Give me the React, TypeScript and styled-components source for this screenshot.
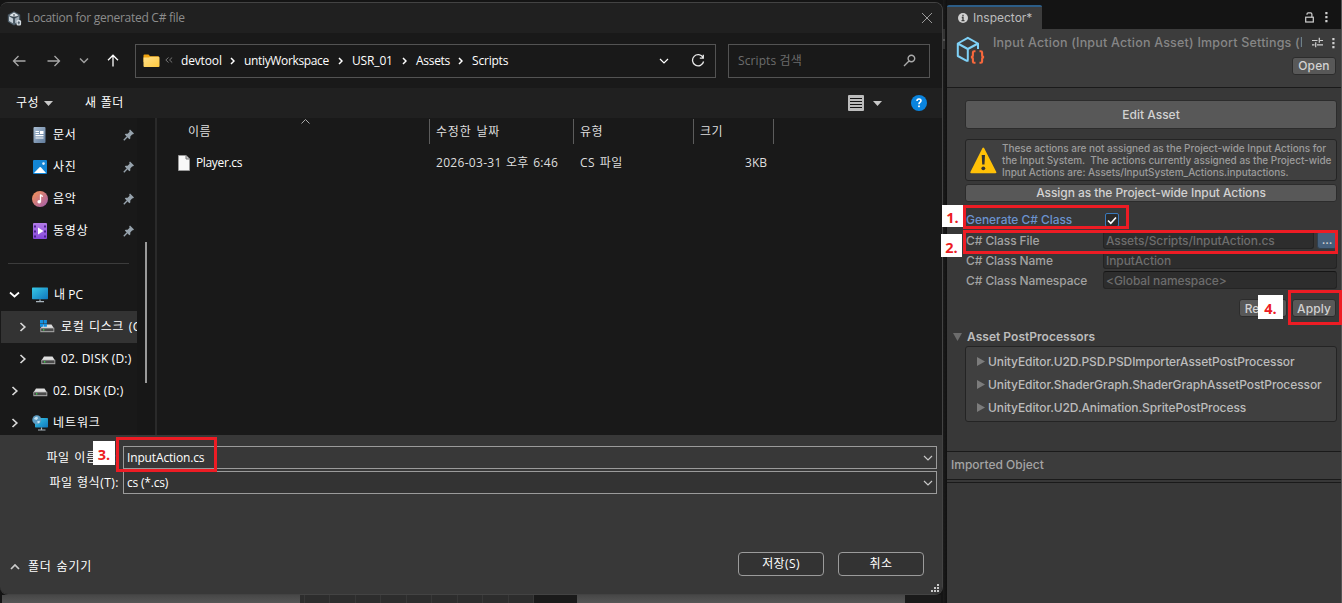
import React from "react";
import styled, { createGlobalStyle, css } from "styled-components";

const Global = createGlobalStyle`
  * { box-sizing: border-box; }
  html, body { margin: 0; padding: 0; background: #141414; overflow: hidden; }
  svg { flex: none; display: block; }
`;

const WIN_FONT = `"Open Sans", "Noto Sans CJK KR", sans-serif`;

const Screen = styled.div`
  position: relative;
  display: flex;
  width: 1342px;
  height: 603px;
  background: #141414;
  overflow: hidden;
`;

/* ---------- text ---------- */
const Text = styled.span<{ $size?: number; $ls?: number; $ws?: number; $color?: string; $weight?: number; $dy?: number }>`
  font-size: ${(p) => p.$size ?? 12}px;
  letter-spacing: ${(p) => p.$ls ?? 0}px;
  word-spacing: ${(p) => p.$ws ?? 0}px;
  color: ${(p) => p.$color ?? "inherit"};
  font-weight: ${(p) => p.$weight ?? "inherit"};
  white-space: pre;
  line-height: 16px;
  ${(p) => p.$dy && css`margin-top: ${p.$dy * 2}px;`}
`;

const Korean = styled(Text).attrs({ $ls: 0.5, $ws: 2 })``;

const UnityText = styled(Text)`
  font-size: 12px;
  font-weight: ${(p) => p.$weight ?? 500};
  letter-spacing: ${(p) => p.$ls ?? -0.09}px;
`;

/* ---------- file dialog ---------- */
const Left = styled.div`
  display: flex;
  flex-direction: column;
  width: 943px;
  padding-top: 2px;
  flex: none;
`;

const Dialog = styled.section`
  display: flex;
  flex-direction: column;
  width: 943px;
  height: 593px;
  border: solid #434343;
  border-width: 1px 1px 1px 0;
  border-radius: 8px;
  overflow: hidden;
  background: #191919;
  color: #fff;
  font-family: ${WIN_FONT};
  font-size: 12px;
`;

const TitleBar = styled.header`
  display: flex;
  align-items: center;
  height: 30px;
  padding: 0 9px 0 7px;
  gap: 5px;
  background: #202020;
  color: #8c8c8c;
`;

const Push = styled.span`
  margin-left: auto;
  display: flex;
`;

const AddressRow = styled.div`
  display: flex;
  align-items: center;
  height: 55px;
  padding-left: 12px;
`;

const NavButtons = styled.div`
  display: flex;
  width: 123px;
  align-items: center;
`;

const PathBox = styled.div`
  display: flex;
  align-items: center;
  width: 581px;
  height: 34px;
  border: 1px solid #535353;
  padding: 0 10px 0 7px;
`;

const Crumb = styled.span<{ $w: number }>`
  display: flex;
  align-items: center;
  width: ${(p) => p.$w}px;
`;

const SearchBox = styled(PathBox)`
  width: 202px;
  margin-left: 12px;
  padding: 0 13px 0 9px;
  justify-content: space-between;
`;

const Toolbar = styled.div`
  display: flex;
  align-items: center;
  height: 30px;
  padding: 0 15px 0 16px;
  background: #202020;
`;

const Main = styled.div`
  display: flex;
  height: 317px;
`;

const Tree = styled.nav`
  width: 137px;
  padding-top: 1px;
  overflow: hidden;
`;

const TreeRow = styled.div<{ $indent?: number; $selected?: boolean }>`
  display: flex;
  align-items: center;
  height: 32px;
  padding-left: ${(p) => p.$indent ?? 0}px;
  margin-left: ${(p) => (p.$selected ? 1 : 0)}px;
  background: ${(p) => (p.$selected ? "#333" : "transparent")};
`;

const Slot = styled.span<{ $w: number }>`
  display: flex;
  flex: none;
  align-items: center;
  width: ${(p) => p.$w}px;
`;

const TreeRule = styled.div`
  height: 1px;
  width: 121px;
  margin: 16px 0 15px 8px;
  background: #3c3c3c;
`;

const ScrollTrack = styled.div`
  width: 20px;
  background: #171717;
  border-right: 2px solid #2a2a2a;
  padding: 124px 0 0 8px;
`;

const ScrollThumb = styled.div`
  width: 2px;
  height: 141px;
  background: #9a9a9a;
`;

const FileList = styled.div`
  flex: 1;
`;

const Row = styled.div<{ $h: number; $top?: number }>`
  display: flex;
  align-items: center;
  height: ${(p) => p.$h}px;
  margin-top: ${(p) => p.$top ?? 0}px;
`;

const Cell = styled.div<{ $w: number; $pad?: number; $rule?: boolean; $end?: boolean }>`
  display: flex;
  align-items: center;
  height: 100%;
  width: ${(p) => p.$w}px;
  padding: 0 ${(p) => (p.$end ? 6 : 0)}px 0 ${(p) => p.$pad ?? 6}px;
  justify-content: ${(p) => (p.$end ? "flex-end" : "flex-start")};
  border-right: 1px solid ${(p) => (p.$rule ? "#5c5c5c" : "transparent")};
  color: #dedede;
`;

const SortMark = styled.span`
  align-self: flex-start;
  display: flex;
  margin-left: 90px;
`;

const Footer = styled.footer`
  display: flex;
  flex-direction: column;
  flex: 1;
  background: #383838;
  padding-top: 11px;
`;

const Field = styled.div<{ $gap?: number }>`
  display: flex;
  align-items: center;
  height: 23px;
  margin-bottom: ${(p) => p.$gap ?? 0}px;
`;

const FieldLabel = styled.label`
  display: flex;
  justify-content: flex-end;
  width: 123px;
  padding-right: 4px;
`;

const Combo = styled.div<{ $dark?: boolean }>`
  display: flex;
  align-items: center;
  justify-content: space-between;
  width: 814px;
  height: 23px;
  border: 1px solid #9b9b9b;
  padding: 0 3px 0 3px;
  background: ${(p) => (p.$dark ? "#333" : "#383838")};
`;

const Actions = styled.div`
  display: flex;
  align-items: center;
  gap: 14px;
  height: 24px;
  margin-top: 58px;
  padding: 0 18px 0 10px;
`;

const HideFolders = styled.div`
  display: flex;
  align-items: center;
  gap: 8px;
  margin: 5px auto 0 0;
`;

const WinButton = styled.button`
  display: flex;
  align-items: center;
  justify-content: center;
  width: 86px;
  height: 24px;
  padding: 0;
  border: 1px solid #9b9b9b;
  border-radius: 4px;
  background: #333;
  color: #fff;
  font-family: inherit;
`;

const Grip = styled.div`
  display: flex;
  justify-content: flex-end;
  padding: 8px 2px 0 0;
`;

/* ---------- editor behind the dialog ---------- */
const Behind = styled.div`
  display: flex;
  height: 8px;
  padding-left: 2px;
`;

const Strip = styled.div<{ $w: number; $bg: string }>`
  width: ${(p) => p.$w}px;
  background: ${(p) => p.$bg};
`;

const Gutter = styled.div`
  width: 4px;
  flex: none;
  padding-top: 29px;
  background: linear-gradient(90deg, #1b1b1b, #101010);
`;

const GutterMark = styled.div`
  width: 2px;
  height: 20px;
  background: linear-gradient(#333 50%, #555 50% 60%, #333 60%);
`;

/* ---------- inspector ---------- */
const Inspector = styled.aside`
  display: flex;
  flex-direction: column;
  width: 395px;
  background: #383838;
  border-right: 1px solid #555;
  font-family: Inter, sans-serif;
  color: #bcbcbc;
`;

const TabBar = styled.div`
  display: flex;
  align-items: flex-end;
  height: 29px;
  background: #141414;
`;

const Tab = styled.div`
  display: flex;
  align-items: center;
  gap: 5px;
  width: 95px;
  height: 24px;
  padding-left: 11px;
  border-top: 2px solid #2c5d87;
  border-radius: 2px 2px 0 0;
  background: #3c3c3c;
`;

const TabTools = styled.div`
  display: flex;
  align-items: center;
  gap: 11px;
  height: 24px;
  margin-left: auto;
  padding-right: 13px;
`;

const AssetHeader = styled.div`
  display: flex;
  height: 59px;
  padding: 7px 5px 0 9px;
  background: #3c3c3c;
  border-bottom: 1px solid #1a1a1a;
`;

const AssetInfo = styled.div`
  display: flex;
  flex-direction: column;
  flex: 1;
  margin-left: 8px;
`;

const AssetTitle = styled.div`
  display: flex;
  align-items: center;
  height: 14px;
  padding-right: 1px;
`;

const AssetTools = styled(Push)`
  margin-top: -1px;
`;

const Clip = styled.div`
  display: flex;
  width: 309px;
  overflow: hidden;
`;

const UnityButton = styled.button<{ $w?: number; $h: number; $blue?: boolean }>`
  display: flex;
  align-items: center;
  justify-content: center;
  flex: none;
  width: ${(p) => (p.$w ? `${p.$w}px` : "100%")};
  height: ${(p) => p.$h}px;
  padding: 0;
  border: 1px solid ${(p) => (p.$blue ? "#30404f" : "#2c2c2c")};
  border-radius: 3px;
  background: ${(p) => (p.$blue ? "#46607c" : "#585858")};
  color: #d2d2d2;
  font-family: inherit;
`;

const Body = styled.div`
  display: flex;
  flex-direction: column;
  height: 363px;
  padding: 12px 4px 0 18px;
`;

const HelpBox = styled.div`
  display: flex;
  align-items: center;
  gap: 5px;
  height: 42px;
  margin: 10px 0 3px;
  padding-left: 4px;
  border: 1px solid #242424;
  border-radius: 3px;
  background: #404040;
`;

const HelpLines = styled.div`
  display: flex;
  flex-direction: column;
  color: #9c9c9c;
`;

const HelpLine = styled(Text).attrs({ $size: 10, $weight: 500, $ls: -0.035 })`
  line-height: 12px;
`;

const Props = styled.div`
  display: flex;
  flex-direction: column;
  margin-top: 8px;
`;

const Prop = styled.div`
  display: flex;
  align-items: center;
  height: 20px;
  padding-left: 1px;
`;

const PropLabel = styled.div<{ $on?: boolean }>`
  display: flex;
  flex: none;
  width: 137px;
  color: ${(p) => (p.$on ? "#6b93cf" : "#a2a2a2")};
`;

const Input = styled.div<{ $w: number }>`
  display: flex;
  flex: none;
  align-items: center;
  width: ${(p) => p.$w}px;
  height: 18px;
  margin-right: 3px;
  padding-left: 2px;
  border: 1px solid #242424;
  border-top-color: #151515;
  border-radius: 3px;
  background: #2d2d2d;
  color: #6c6c6c;
`;

const Check = styled.div`
  display: flex;
  align-items: center;
  justify-content: center;
  width: 14px;
  height: 14px;
  margin-left: 2px;
  border: 1px solid #3a79bb;
  border-radius: 2px;
  background: #2a2a2a;
`;

const ApplyRow = styled.div`
  display: flex;
  justify-content: flex-end;
  gap: 5px;
  margin-top: 9px;
  padding-right: 1px;
`;

const Foldout = styled.div`
  display: flex;
  align-items: center;
  gap: 5px;
  height: 19px;
  margin: 10px 0 0 -12px;
`;

const Processors = styled.div`
  display: flex;
  flex-direction: column;
  height: 76px;
  padding: 3px 0 0 11px;
  border: 1px solid #242424;
  border-radius: 3px;
  background: #404040;
`;

const Processor = styled.div`
  display: flex;
  align-items: center;
  gap: 3px;
  height: 23px;
`;

const Imported = styled.div`
  display: flex;
  align-items: center;
  height: 29px;
  padding: 0 0 2px 4px;
  border: solid #1a1a1a;
  border-width: 1px 0;
  background: #3c3c3c;
`;

const ImportedRule = styled.div`
  height: 3px;
  border-bottom: 1px solid #1a1a1a;
`;

/* ---------- step annotations laid over the windows ---------- */
const Frame = styled.div<{ $x: number; $y: number; $w: number; $h: number }>`
  position: absolute;
  left: ${(p) => p.$x}px;
  top: ${(p) => p.$y}px;
  width: ${(p) => p.$w}px;
  height: ${(p) => p.$h}px;
  border: 3px solid #ed1c24;
`;

const Step = styled.div<{ $x: number; $y: number; $w: number; $h: number }>`
  position: absolute;
  display: flex;
  align-items: center;
  justify-content: center;
  left: ${(p) => p.$x}px;
  top: ${(p) => p.$y}px;
  width: ${(p) => p.$w}px;
  height: ${(p) => p.$h}px;
  padding-top: 4px;
  background: #fff;
  color: #ed1c24;
  font: 700 14.5px/14px "Open Sans", sans-serif;
`;

/* ---------- icons ---------- */
const Line = ({ d, w = 12, h = 12, c = "#fff", sw = 1.3 }: { d: string; w?: number; h?: number; c?: string; sw?: number }) => (
  <svg width={w} height={h} viewBox={`0 0 ${w} ${h}`} fill="none" stroke={c} strokeWidth={sw}>
    <path d={d} />
  </svg>
);

const Shape = ({ d, w, h, c }: { d: string; w: number; h: number; c: string }) => (
  <svg width={w} height={h} viewBox={`0 0 ${w} ${h}`} fill={c}>
    <path d={d} />
  </svg>
);

const UnityLogo = () => (
  <svg width="15" height="15" viewBox="0 0 15 15">
    <path d="M7 .3 13.2 3.8v7L7 14.4.8 10.8v-7z" fill="#4c5b66" />
    <path d="M7 1.6 11.6 4.2 7 6.8 2.4 4.2z" fill="#dfe5ea" />
    <path d="M2 5.2 6.3 7.7v4.8L2 10z" fill="#c4ced6" />
    <path d="M12 5.2 7.7 7.7v4.8L12 10z" fill="#9eabb6" />
    <path d="M7 3v3.8M4.6 5.6 7 6.8l2.4-1.2M7 7v5" stroke="#33404a" fill="none" />
    <rect x="9.5" y="9" width="4.6" height="5.6" rx="1.5" fill="#d5dde3" />
    <path d="M11.8 10.2v3.2M10.6 11.8h2.4" stroke="#44525d" strokeWidth=".9" />
  </svg>
);

const Folder = () => (
  <svg width="17" height="14" viewBox="0 0 17 14">
    <defs><linearGradient id="fold" x2="1" y2="1"><stop stopColor="#ffe08a" /><stop offset="1" stopColor="#ffc93e" /></linearGradient></defs>
    <path d="M.5 1.5q0-1 1-1h4l1.6 1.7H15q1 0 1 1V8H.5z" fill="#f0a30f" />
    <path d="M.5 3.6H6l1.4-.9H15.500q1 0 1 1v8.300q0 1-1 1h-14q-1 0-1-1z" fill="url(#fold)" />
  </svg>
);

const DocIcon = () => (
  <svg width="14" height="16" viewBox="-1 0 14 16">
    <defs><linearGradient id="doc" x2="1" y2="1"><stop stopColor="#a9bdd2" /><stop offset="1" stopColor="#607b9b" /></linearGradient></defs>
    <rect x=".5" width="12" height="16" rx="1" fill="url(#doc)" />
    <path d="M2.500 4.500h3.500M2.500 6.500h3.500M2.500 8.700h8M2.500 11h8" stroke="#fff" strokeWidth="1.200" />
    <rect x="7" y="4" width="3.500" height="3" fill="#fff" />
  </svg>
);

const PictureIcon = () => (
  <svg width="15" height="14" viewBox="-1 0 15 14">
    <rect width="14" height="14" rx="1" fill="#1385d4" />
    <path d="M1 13 6.500 7.300q.7-.6 1.400 0L13 13z" fill="#fff" />
    <circle cx="10.500" cy="3.600" r="1.300" fill="#dff1ff" />
  </svg>
);

const MusicIcon = () => (
  <svg width="16" height="16" viewBox="0 0 16 16">
    <defs><linearGradient id="mus" x2="1" y2="1"><stop offset=".1" stopColor="#f0905c" /><stop offset=".9" stopColor="#a861a6" /></linearGradient></defs>
    <circle cx="8" cy="8" r="8" fill="url(#mus)" />
    <circle cx="7.200" cy="10.800" r="1.800" fill="#fff" />
    <path d="M8.500 10.800V3.500q.6 1.600 2.500 1.800" stroke="#fff" strokeWidth="1.300" fill="none" />
  </svg>
);

const VideoIcon = () => (
  <svg width="15" height="16" viewBox="-1 0 15 16">
    <defs><linearGradient id="vid" x2="0" y2="1"><stop stopColor="#b37be8" /><stop offset="1" stopColor="#8548db" /></linearGradient></defs>
    <rect width="14" height="16" rx="1" fill="url(#vid)" />
    <path d="M2 2.500v12M12 2.500v12" stroke="#4b2390" strokeWidth="2" strokeDasharray="2 3" />
    <path d="M5 4.500 10.500 8 5 11.500z" fill="#fff" />
  </svg>
);

const Pin = () => (
  <svg width="12" height="12" viewBox="0 0 12 12">
    <path d="M7 .5 11 4.500 9.800 5.500 9.300 5.300 7.300 7.500 7.300 9.500 6.300 10.300 1.800 5.600 2.600 4.700 4.600 4.700 6.600 2.700 6.200 1.600z" fill="#97a3ad" />
    <path d="M4.200 7.700.8 11.200" stroke="#97a3ad" strokeWidth="1.300" />
  </svg>
);

const Monitor = ({ globe }: { globe?: boolean }) => (
  <svg width="17" height="16" viewBox="0 0 17 16">
    <defs><linearGradient id="mon" x2="1" y2="1"><stop stopColor="#37c8e6" /><stop offset="1" stopColor="#0f76bd" /></linearGradient></defs>
    <rect x={globe ? 3 : 0} y={globe ? 3 : 0.5} width={globe ? 13 : 16} height={globe ? 9.500 : 11.800} rx=".7" fill="url(#mon)" />
    <path d={globe ? "M9.500 12.500v2M6 15h7.500" : "M8 12.500v2M4 14.700h8"} stroke="#a9b5bd" strokeWidth="1.200" />
    {globe && <circle cx="4.800" cy="4.800" r="4.500" fill="#5d9dc4" />}
    {globe && <path d="M1.800 4q1-2.500 3.500-2.500L6 3.500 4.500 5zM5 6.500l2.500-.8.5 1.500-2 1.300z" fill="#c4e2f1" />}
  </svg>
);

const Disk = ({ win }: { win?: boolean }) => (
  <svg width="15" height="15" viewBox="0 0 15 15">
    <path d="M3 4.500h8.500L14 8.500H.5z" fill="#dedede" />
    <rect x=".3" y="7.800" width="14" height="4.400" fill="#a3a3a3" />
    <rect x="1.200" y="8.500" width="12.200" height="2.600" fill="#4a4a4a" />
    <rect x="3" y="9.200" width="1.300" height="1.300" fill="#35e04a" />
    {win && <path d="M0 0h3.200v3.200H0zM3.700 0h3.200v3.200H3.700zM0 3.700h3.200v3H0zM3.700 3.700h3.200v3H3.700z" fill="#1490df" />}
  </svg>
);

const FileIcon = () => (
  <svg width="12" height="16" viewBox="0 0 12 16">
    <path d="M.5.5H8L11.500 4v11.500H.5z" fill="#f8f8f8" stroke="#999" />
    <path d="M8 .5V4h3.500" fill="#ccc" stroke="#777" />
  </svg>
);

const ViewIcon = () => (
  <svg width="16" height="16" viewBox="0 0 16 16">
    <rect width="16" height="16" rx="1" fill="#bcbcbc" />
    <path d="M2 3.500h12M2 6.500h12M2 9.500h12M2 12.500h12" stroke="#141414" />
  </svg>
);

const HelpIcon = () => (
  <svg width="16" height="16" viewBox="0 0 16 16">
    <circle cx="8" cy="8" r="8" fill="#0a84de" />
    <path d="M6 6q0-2 2-2t2 1.800q0 1-1.200 1.700Q8 8 8 9.300" fill="none" stroke="#fff" strokeWidth="1.600" />
    <rect x="7.100" y="10.500" width="1.800" height="1.700" fill="#fff" />
  </svg>
);

const GripIcon = () => (
  <Shape w={9} h={9} c="#c8c8c8" d="M6 0h2v2H6zM3 3h2v2H3zM6 3h2v2H6zM0 6h2v2H0zM3 6h2v2H3zM6 6h2v2H6z" />
);

const InfoIcon = () => (
  <svg width="10" height="10" viewBox="0 0 10 10">
    <circle cx="5" cy="5" r="5" fill="#d0d0d0" />
    <path d="M5 1.800v1.500M3.800 4.500H5v3M3.500 7.700h3" stroke="#3c3c3c" strokeWidth="1.300" fill="none" />
  </svg>
);

const Lock = () => (
  <svg width="9" height="11" viewBox="0 0 9 11" fill="none" stroke="#d0d0d0" strokeWidth="1.200">
    <rect x=".7" y="5.200" width="7.600" height="4.800" />
    <path d="M2 2.800V2q0-1.200 1.200-1.200h2.400q1.300 0 1.300 1.400v3" />
  </svg>
);

const Kebab = () => <Shape w={3} h={12} c="#d0d0d0" d="M.3 1h2.200v2.200H.3zM.3 5h2.200v2.200H.3zM.3 9h2.200v2.200H.3z" />;

const Sliders = () => <Line w={11} h={11} c="#d0d0d0" sw={1.2} d="M0 3.500h5.500M8 3.500h3M7.300.8v5M0 7.800h2.500M5 7.800h6M3.700 5.300v5" />;

const AssetIcon = () => (
  <svg width="29" height="29" viewBox="0 0 29 29" fill="none">
    <path d="M12.500 24.800 10.800 24.800 1.800 20V7.500L11.800 1.800 22 7.500V13M1.800 7.500 11.800 13 22 7.500M11.800 13V24.500" stroke="#7fd1f7" strokeWidth="2" strokeLinejoin="round" />
    <path d="M19.500 15.300h-1.300q-1.300 0-1.300 1.300v2.700q0 1.600-1.900 1.800 1.900.2 1.900 1.800v2.600q0 1.300 1.300 1.300h1.300M23.500 15.300h1.300q1.300 0 1.300 1.300v2.700q0 1.600 1.900 1.800-1.900.2-1.900 1.800v2.600q0 1.300-1.300 1.300h-1.300" stroke="#f8683c" strokeWidth="2.100" />
  </svg>
);

const Warning = () => (
  <svg width="27" height="27" viewBox="0 0 27 27">
    <path d="M13.300 1.500 25.500 25.300H1.200z" fill="#ffc107" stroke="#ffc107" strokeWidth="1.800" strokeLinejoin="round" />
    <path d="M11.700 8h3.300l-.5 9.500h-2.300z" fill="#333" />
    <circle cx="13.300" cy="21.300" r="1.900" fill="#333" />
  </svg>
);

const Right = ({ c = "#d8d8d8" }: { c?: string }) => <Line w={8} h={12} c={c} sw={1.7} d="M1.500 2 5.800 6 1.500 10" />;
const Down = ({ c = "#fff" }: { c?: string }) => <Line w={10} h={8} c={c} sw={1.2} d="M1 2 5 6 9 2" />;

const crumbs: [string, number, number][] = [
  ["devtool", 63, -0.15],
  ["untiyWorkspace", 108, -0.35],
  ["USR_01", 64, -0.15],
  ["Assets", 56, -0.3],
];

const places: [string, React.ReactNode][] = [
  ["문서", <DocIcon />],
  ["사진", <PictureIcon />],
  ["음악", <MusicIcon />],
  ["동영상", <VideoIcon />],
];

function FileDialog() {
  return (
    <Dialog>
      <TitleBar>
        <UnityLogo />
        <Text $ls={-0.27}>Location for generated C# file</Text>
        <Push><Line w={12} h={12} c="#9a9a9a" sw={1} d="M1 1 11 11M11 1 1 11" /></Push>
      </TitleBar>
      <AddressRow>
        <NavButtons>
          <Slot $w={35}><Line w={14} h={12} c="#a8a8a8" d="M13.500 6H1.500M6.500 1 1.500 6l5 5" /></Slot>
          <Slot $w={32}><Line w={14} h={12} c="#a8a8a8" d="M.5 6h12M7.500 1l5 5-5 5" /></Slot>
          <Slot $w={28}><Line w={10} h={8} c="#a0a0a0" sw={1.5} d="M1 1.500 5 5.500 9 1.500" /></Slot>
          <Line w={12} h={13} c="#fff" d="M6 12.500V1.500M1 6.200 6 1.200l5 5" />
        </NavButtons>
        <PathBox>
          <Slot $w={22}><Folder /></Slot>
          <Slot $w={16}><Line w={8} h={8} c="#777" sw={1} d="M3.500 .5.800 3 3.500 5.500M7.200.5 4.500 3 7.200 5.500" /></Slot>
          {crumbs.map(([name, w, ls]) => (
            <Crumb key={name} $w={w}>
              <Text $ls={ls}>{name}</Text>
              <Push><Slot $w={14}><Line w={5} h={8} sw={1.5} d="M1 1 4 4 1 7" /></Slot></Push>
            </Crumb>
          ))}
          <Text $ls={-0.2}>Scripts</Text>
          <Push><Slot $w={32}><Down /></Slot>
            <Line w={14} h={14} c="#e8e8e8" d="M12 3.500A5.600 5.600 0 1 0 12.600 7.500M12.300.8v3.400H8.800" /></Push>
        </PathBox>
        <SearchBox>
          <Text $color="#6c6c6c" $ls={0.1}>Scripts 검색</Text>
          <Line w={13} h={13} c="#aaa" sw={1.400} d="M11.700 4.500a3.300 3.300 0 1 1-6.600 0a3.300 3.300 0 1 1 6.600 0M6 7 1 12" />
        </SearchBox>
      </AddressRow>
      <Toolbar>
        <Slot $w={69}><Korean>구성</Korean><Slot $w={5} /><Shape w={9} h={5} c="#c8c8c8" d="M0 0h9L4.500 5z" /></Slot>
        <Text $ls={0.5} $ws={0.5}>새 폴더</Text>
        <Push>
          <Slot $w={25}><ViewIcon /></Slot>
          <Slot $w={38}><Shape w={9} h={5} c="#c8c8c8" d="M0 0h9L4.500 5z" /></Slot>
          <HelpIcon />
        </Push>
      </Toolbar>
      <Main>
        <Tree>
          {places.map(([name, icon]) => (
            <TreeRow key={name} $indent={32}>
              <Slot $w={21}>{icon}</Slot>
              <Text $ls={0.8}>{name}</Text>
              <Push><Slot $w={14}><Pin /></Slot></Push>
            </TreeRow>
          ))}
          <TreeRule />
          <TreeRow $indent={9}><Slot $w={23}><Line w={11} h={8} sw={1.7} d="M1 1.500 5.500 5.500 10 1.500" /></Slot><Slot $w={22}><Monitor /></Slot><Text>내 PC</Text></TreeRow>
          <TreeRow $indent={18} $selected><Slot $w={21}><Right /></Slot><Slot $w={21}><Disk win /></Slot><Text $ls={0.6} $ws={1}>로컬 디스크 (C:)</Text></TreeRow>
          <TreeRow $indent={19}><Slot $w={22}><Right /></Slot><Slot $w={20}><Disk /></Slot><Text $ls={0.18}>02. DISK (D:)</Text></TreeRow>
          <TreeRow $indent={11}><Slot $w={22}><Right /></Slot><Slot $w={20}><Disk /></Slot><Text $ls={0.18}>02. DISK (D:)</Text></TreeRow>
          <TreeRow $indent={11}><Slot $w={21}><Right /></Slot><Slot $w={21}><Monitor globe /></Slot><Text $ls={0.9}>네트워크</Text></TreeRow>
        </Tree>
        <ScrollTrack><ScrollThumb /></ScrollTrack>
        <FileList>
          <Row $h={25} $top={1}>
            <Cell $w={273} $pad={31} $rule><Korean>이름</Korean><SortMark><Line w={9} h={5} c="#aaa" sw={1} d="M.5 4.500 4.500.5 8.500 4.500" /></SortMark></Cell>
            <Cell $w={144} $rule><Text $ls={0.8} $ws={1}>수정한 날짜</Text></Cell>
            <Cell $w={120} $rule><Korean>유형</Korean></Cell>
            <Cell $w={80} $rule><Korean>크기</Korean></Cell>
          </Row>
          <Row $h={33} $top={2}>
            <Cell $w={273} $pad={21}><Slot $w={18}><FileIcon /></Slot><Text $color="#fff" $ls={-0.35}>Player.cs</Text></Cell>
            <Cell $w={144}><Text $ls={0.3} $ws={1}>2026-03-31 오후 6:46</Text></Cell>
            <Cell $w={120}><Text $ls={0.5} $ws={1}>CS 파일</Text></Cell>
            <Cell $w={80} $end><Text>3KB</Text></Cell>
          </Row>
        </FileList>
      </Main>
      <Footer>
        <Field $gap={2}>
          <FieldLabel><Text $ls={0.55} $ws={1}>파일 이름(N):</Text></FieldLabel>
          <Combo><Text $ls={-0.15}>InputAction.cs</Text><Down c="#c8c8c8" /></Combo>
        </Field>
        <Field>
          <FieldLabel><Text $ls={0.5} $ws={1}>파일 형식(T):</Text></FieldLabel>
          <Combo $dark><Text $ls={-0.2}>cs (*.cs)</Text><Down c="#c8c8c8" /></Combo>
        </Field>
        <Actions>
          <HideFolders><Line w={10} h={8} c="#ccc" sw={1.700} d="M1 6 5 2 9 6" /><Text $ls={0.8} $ws={1}>폴더 숨기기</Text></HideFolders>
          <WinButton><Text $ls={0.4}>저장(S)</Text></WinButton>
          <WinButton><Korean>취소</Korean></WinButton>
        </Actions>
        <Grip><GripIcon /></Grip>
      </Footer>
    </Dialog>
  );
}

function InspectorPanel() {
  return (
    <Inspector>
      <TabBar>
        <Tab><InfoIcon /><Text $size={12}>Inspector*</Text></Tab>
        <TabTools><Lock /><Kebab /></TabTools>
      </TabBar>
      <AssetHeader>
        <AssetIcon />
        <AssetInfo>
          <AssetTitle>
            <Clip><Text $size={12.5} $ls={0.2} $weight={500} $color="#868686">Input Action (Input Action Asset) Import Settings (Input</Text></Clip>
            <AssetTools><Slot $w={20}><Sliders /></Slot><Kebab /></AssetTools>
          </AssetTitle>
          <Row $h={18} $top={7}><Push><UnityButton $w={44} $h={18}><UnityText $ls={0.15}>Open</UnityText></UnityButton></Push></Row>
        </AssetInfo>
      </AssetHeader>
      <Body>
        <UnityButton $h={29}><UnityText $ls={0}>Edit Asset</UnityText></UnityButton>
        <HelpBox>
          <Warning />
          <HelpLines>
            <HelpLine>These actions are not assigned as the Project-wide Input Actions for</HelpLine>
            <HelpLine>the Input System.  The actions currently assigned as the Project-wide</HelpLine>
            <HelpLine>Input Actions are: Assets/InputSystem_Actions.inputactions.</HelpLine>
          </HelpLines>
        </HelpBox>
        <UnityButton $h={18}><UnityText $dy={-0.5} $ls={-0.07}>Assign as the Project-wide Input Actions</UnityText></UnityButton>
        <Props>
          <Prop><PropLabel $on><UnityText $ls={-0.05}>Generate C# Class</UnityText></PropLabel><Check><Line w={10} h={9} sw={1.600} d="M1 4.500 3.800 7.300 9 1.500" /></Check></Prop>
          <Prop><PropLabel><UnityText $dy={0.5}>C# Class File</UnityText></PropLabel><Input $w={211}><UnityText $dy={0.5}>Assets/Scripts/InputAction.cs</UnityText></Input><UnityButton $w={20} $h={18} $blue><UnityText>...</UnityText></UnityButton></Prop>
          <Prop><PropLabel><UnityText $dy={0.5}>C# Class Name</UnityText></PropLabel><Input $w={234}><UnityText $dy={0.5}>InputAction</UnityText></Input></Prop>
          <Prop><PropLabel><UnityText $dy={0.5}>C# Class Namespace</UnityText></PropLabel><Input $w={234}><UnityText $dy={0.5}>&lt;Global namespace&gt;</UnityText></Input></Prop>
        </Props>
        <ApplyRow>
          <UnityButton $w={48} $h={18}><UnityText $dy={0.5}>Revert</UnityText></UnityButton>
          <UnityButton $w={44} $h={18}><UnityText $dy={0.5} $ls={0.1}>Apply</UnityText></UnityButton>
        </ApplyRow>
        <Foldout><Shape w={9} h={8} c="#6c6c6c" d="M0 0h9L4.500 8z" /><UnityText $weight={600} $ls={0.03}>Asset PostProcessors</UnityText></Foldout>
        <Processors>
          {["UnityEditor.U2D.PSD.PSDImporterAssetPostProcessor", "UnityEditor.ShaderGraph.ShaderGraphAssetPostProcessor", "UnityEditor.U2D.Animation.SpritePostProcess"].map((name) => (
            <Processor key={name}><Shape w={8} h={9} c="#7c7c7c" d="M0 0v9L8 4.500z" /><UnityText>{name}</UnityText></Processor>
          ))}
        </Processors>
      </Body>
      <Imported><UnityText $ls={0} $color="#a4a4a4">Imported Object</UnityText></Imported>
      <ImportedRule />
    </Inspector>
  );
}

export default function App() {
  return (
    <Screen>
      <Global />
      <Left>
        <FileDialog />
        <Behind>
          <Strip $w={298} $bg="linear-gradient(#474747, #565656)" />
          <Strip $w={234} $bg="repeating-linear-gradient(90deg, transparent 0 4px, #383838 4px 5px, transparent 5px 25.5px), #2d2d2d" />
          <Strip $w={43} $bg="#1a1a1a" />
          <Strip $w={328} $bg="linear-gradient(#474747, #565656)" />
          <Strip $w={36} $bg="#1a1a1a" />
        </Behind>
      </Left>
      <Gutter><GutterMark /></Gutter>
      <InspectorPanel />
      <Frame $x={963} $y={205} $w={166} $h={24} />
      <Frame $x={963} $y={230} $w={375} $h={24} />
      <Frame $x={116} $y={437} $w={101} $h={35} />
      <Frame $x={1288} $y={290} $w={54} $h={35} />
      <Step $x={942} $y={205} $w={21} $h={22}>1.</Step>
      <Step $x={941} $y={234} $w={21} $h={23}>2.</Step>
      <Step $x={93} $y={441} $w={22} $h={24}>3.</Step>
      <Step $x={1258} $y={295} $w={25} $h={24}>4.</Step>
    </Screen>
  );
}
